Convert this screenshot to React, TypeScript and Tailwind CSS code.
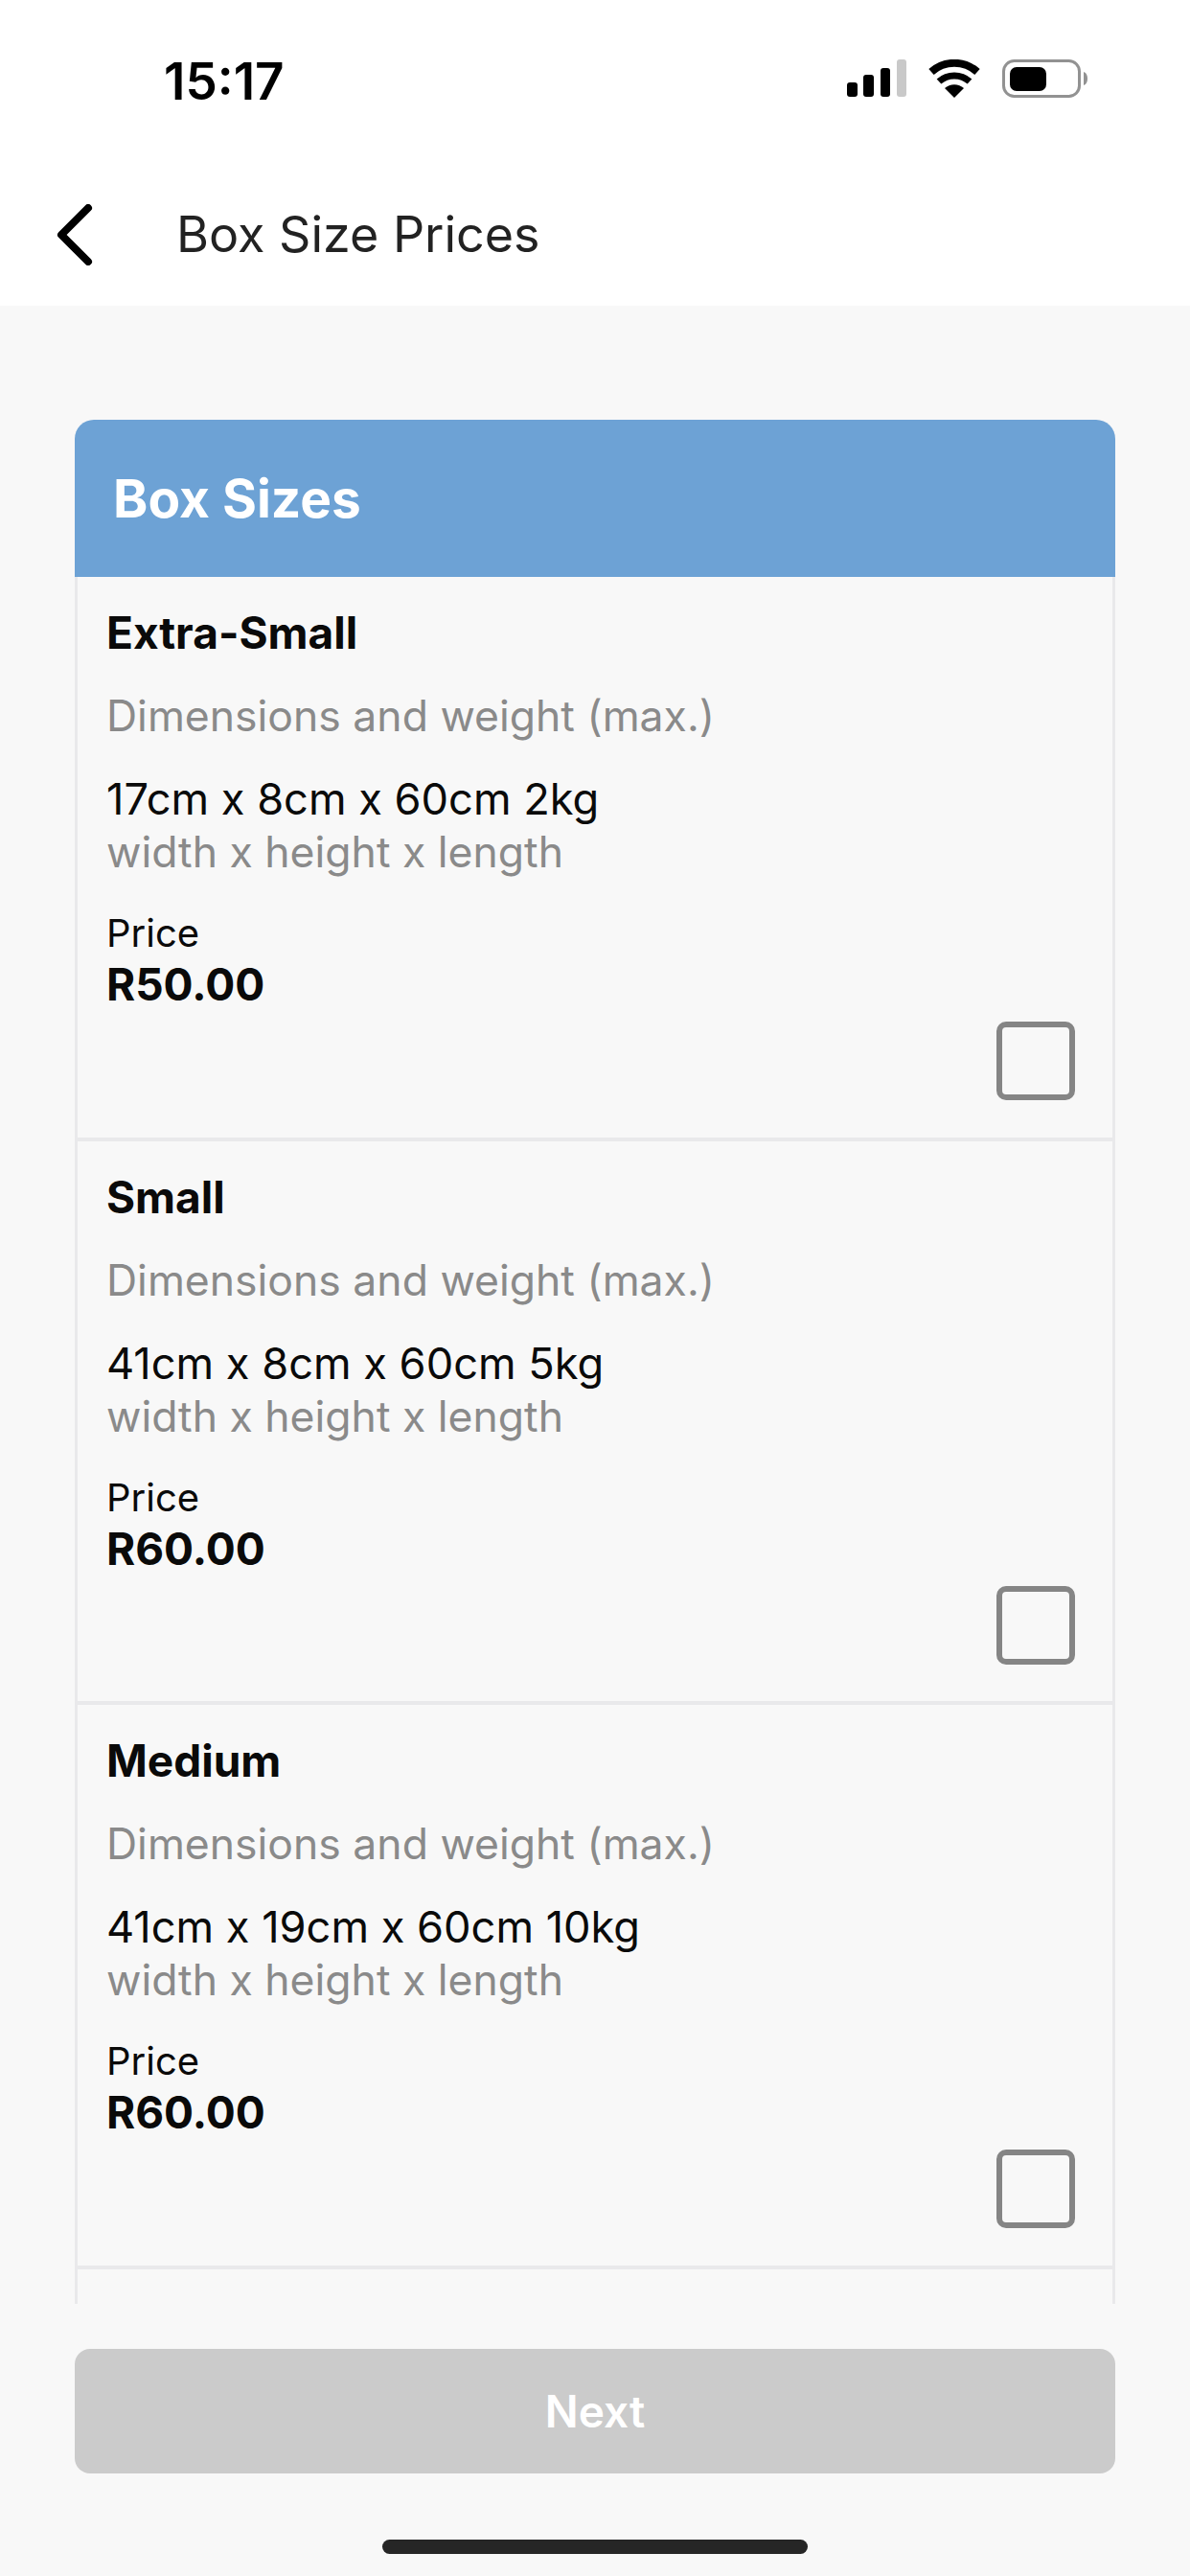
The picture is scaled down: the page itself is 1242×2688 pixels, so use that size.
const sizes = [
  { name: 'Extra-Small', dims: '17cm x 8cm x 60cm 2kg', price: 'R50.00' },
  { name: 'Small', dims: '41cm x 8cm x 60cm 5kg', price: 'R60.00' },
  { name: 'Medium', dims: '41cm x 19cm x 60cm 10kg', price: 'R60.00' },
]

function StatusIcons() {
  return (
    <svg width="252" height="41" viewBox="0 0 252 41" fill="none">
      {/* signal */}
      <rect x="0" y="24" width="11" height="15" rx="3" fill="#000" />
      <rect x="17" y="16" width="11" height="23" rx="3" fill="#000" />
      <rect x="35" y="9" width="10" height="30" rx="3" fill="#000" />
      <rect x="52" y="0" width="10" height="39" rx="3" fill="#c9c9c9" />
      {/* wifi */}
      <path d="M88 17 A36 36 0 0 1 136 17" stroke="#000" strokeWidth="8" transform="translate(0 -4)" />
      <path d="M96 26 A24 24 0 0 1 128 26" stroke="#000" strokeWidth="7" transform="translate(0 -3)" />
      <path d="M112 40 L102 30 A15 15 0 0 1 122 30 Z" fill="#000" />
      {/* battery */}
      <rect x="163.5" y="1.5" width="79" height="37" rx="11" stroke="#929292" strokeWidth="3" />
      <rect x="170" y="8" width="38" height="25" rx="7" fill="#000" />
      <path d="M247 13 C250 14 251 17 251 20 C251 23 250 26 247 27 Z" fill="#929292" />
    </svg>
  )
}

function BoxRow({ name, dims, price }: { name: string; dims: string; price: string }) {
  return (
    <div className="border-b-4 border-[#e9e9eb] pl-[30px] pr-[39px] pt-[30px] pb-[38.5px]">
      <div className="text-[46px] leading-[56px] font-bold text-[#0a0a0a]">{name}</div>
      <div className="mt-[31px] text-[44.5px] leading-[56px] text-[#8a8a8a]">Dimensions and weight (max.)</div>
      <div className="mt-[31px] text-[45.2px] leading-[56px] text-[#0a0a0a]">{dims}</div>
      <div className="-mt-px text-[44.5px] leading-[56px] text-[#8a8a8a]">width x height x length</div>
      <div className="mt-[31px] text-[40px] leading-[52px] text-[#0a0a0a]">Price</div>
      <div className="text-[46px] leading-[54px] font-bold text-[#0a0a0a]">{price}</div>
      <div className="mt-[12px] flex justify-end">
        <div className="h-[82px] w-[82px] rounded-[10px] border-[6px] border-[#858585]" />
      </div>
    </div>
  )
}

export default function App() {
  return (
    <div className="flex h-[2688px] w-[1242px] flex-col overflow-hidden bg-[#f8f8f8] font-['Inter',sans-serif]">
      <div className="h-[319px] bg-white">
        <div className="flex items-start justify-between pl-[171px] pr-[106px] pt-[62px]">
          <span className="text-[53px] leading-[46px] font-semibold text-black">15:17</span>
          <StatusIcons />
        </div>
        <div className="mt-[105px] flex items-center pl-[59px]">
          <svg width="38" height="64" viewBox="0 0 38 64" fill="none">
            <path d="M33 4 L5 32 L33 60" stroke="#000" strokeWidth="8" strokeLinecap="round" strokeLinejoin="round" />
          </svg>
          <span className="ml-[87px] text-[52px] leading-[64px] text-[#222]">Box Size Prices</span>
        </div>
      </div>

      <div className="flex min-h-0 flex-1 flex-col px-[78px] pt-[119px]">
        <div className="flex h-[164px] items-center rounded-t-[20px] bg-[#6da2d5] pl-[40px]">
          <span className="text-[55px] font-bold text-white">Box Sizes</span>
        </div>
        <div className="h-[1802px] overflow-hidden border-x-[3px] border-[#e9e9eb]">
          {sizes.map(s => (
            <BoxRow key={s.name} {...s} />
          ))}
        </div>
        <button className="mt-[47px] h-[130px] rounded-[16px] bg-[#cbcbcb] text-[46px] font-semibold text-white">
          Next
        </button>
        <div className="mt-[69px] flex justify-center">
          <div className="h-[15px] w-[444px] rounded-full bg-[#262626]" />
        </div>
      </div>
    </div>
  )
}
